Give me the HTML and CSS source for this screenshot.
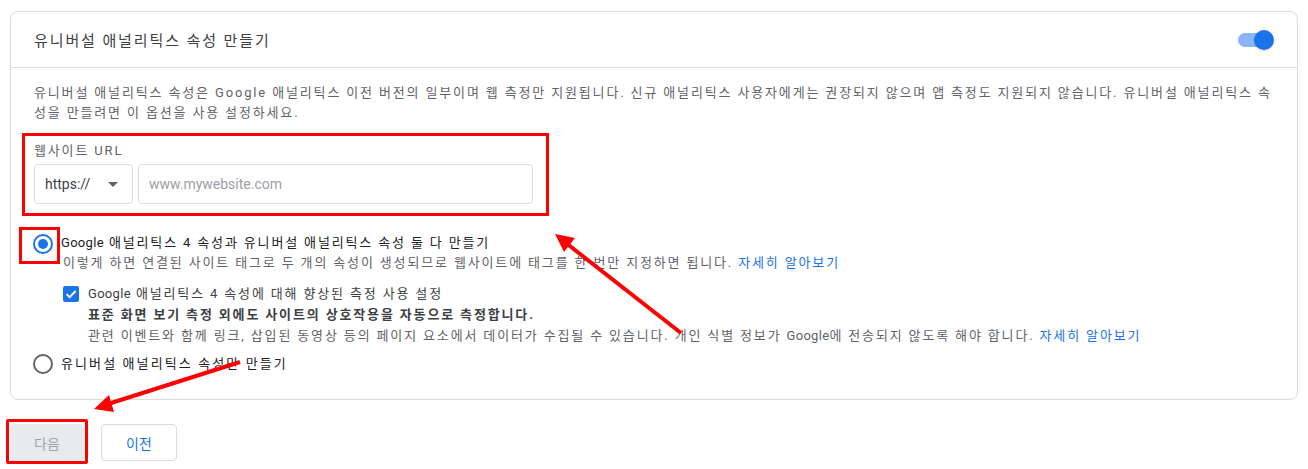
FILE: index.html
```html
<!DOCTYPE html>
<html lang="ko">
<head>
<meta charset="utf-8">
<link rel="stylesheet" href="styles.css">
</head>
<body>
<div class="page">
  <section class="card">
    <header class="card-header">
      <h2 class="card-title">유니버설 애널리틱스 속성 만들기</h2>
      <span class="toggle"><span class="toggle-track"></span><span class="toggle-knob"></span></span>
    </header>
    <div class="card-body">
      <p class="desc">유니버설 애널리틱스 속성은 Google 애널리틱스 이전 버전의 일부이며 웹 측정만 지원됩니다. 신규 애널리틱스 사용자에게는 권장되지 않으며 앱 측정도 지원되지 않습니다. 유니버설 애널리틱스 속성을 만들려면 이 옵션을 사용 설정하세요.</p>
      <div class="url-block">
        <div class="url-label">웹사이트 URL</div>
        <div class="url-fields">
          <div class="select"><span>https://</span><span class="caret"></span></div>
          <div class="input">www.mywebsite.com</div>
        </div>
      </div>
      <div class="options">
        <div class="option">
          <span class="radio checked"></span>
          <div class="option-text">
            <div class="option-label"><span class="en">Google</span> 애널리틱스 4 속성과 유니버설 애널리틱스 속성 둘 다 만들기</div>
            <div class="option-help">이렇게 하면 연결된 사이트 태그로 두 개의 속성이 생성되므로 웹사이트에 태그를 한 번만 지정하면 됩니다. <a class="link">자세히 알아보기</a></div>
            <div class="check-row">
              <span class="checkbox"><svg viewBox="0 0 16 16" width="16" height="16"><path d="M3.5 8.2 L6.6 11.2 L12.6 5" fill="none" stroke="#fff" stroke-width="1.8"/></svg></span>
              <div class="check-text">
                <div class="check-label"><span class="en">Google</span> 애널리틱스 4 속성에 대해 향상된 측정 사용 설정</div>
                <div class="check-strong">표준 화면 보기 측정 외에도 사이트의 상호작용을 자동으로 측정합니다.</div>
                <div class="check-help">관련 이벤트와 함께 링크, 삽입된 동영상 등의 페이지 요소에서 데이터가 수집될 수 있습니다. 개인 식별 정보가 <span class="en">Google</span>에 전송되지 않도록 해야 합니다. <a class="link">자세히 알아보기</a></div>
              </div>
            </div>
          </div>
        </div>
        <div class="option option-2">
          <span class="radio"></span>
          <div class="option-text">
            <div class="option-label wide">유니버설 애널리틱스 속성만 만들기</div>
          </div>
        </div>
      </div>
    </div>
  </section>
  <div class="actions">
    <button class="btn btn-disabled">다음</button>
    <button class="btn btn-outline">이전</button>
  </div>

  <div class="mark mark-url"></div>
  <div class="mark mark-radio"></div>
  <div class="mark mark-next"></div>
  <svg class="arrows" width="1308" height="469" viewBox="0 0 1308 469">
    <line x1="681" y1="333" x2="566" y2="243" stroke="#ff0000" stroke-width="4"/>
    <polygon points="555,234 575,238 564,252" fill="#ff0000"/>
    <line x1="240" y1="362" x2="108" y2="404" stroke="#ff0000" stroke-width="4"/>
    <polygon points="94,409 109,395 114,412" fill="#ff0000"/>
  </svg>
</div>
</body>
</html>
```

FILE: styles.css
```css
* { box-sizing: border-box; }
html, body { margin: 0; padding: 0; background: #fff; }
body {
  font-family: Roboto, "Noto Sans CJK KR", "Noto Sans", sans-serif;
  color: #202124;
}
.page {
  position: relative;
  width: 1308px;
  height: 469px;
  padding-top: 11px;
  overflow: hidden;
}
.card {
  margin: 0 10px;
  border: 1px solid #dadce0;
  border-radius: 8px;
}
.card-header {
  height: 56px;
  padding: 0 23px;
  display: flex;
  align-items: center;
  justify-content: space-between;
  border-bottom: 1px solid #dadce0;
}
.card-title {
  margin: 0;
  font-size: 15px;
  font-weight: 400;
  letter-spacing: 1.9px;
  color: #3c4043;
}
.toggle {
  position: relative;
  width: 36px;
  height: 20px;
  display: block;
}
.toggle-track {
  position: absolute;
  left: 0;
  top: 3px;
  width: 34px;
  height: 14px;
  border-radius: 7px;
  background: #8ab4f8;
}
.toggle-knob {
  position: absolute;
  right: 0;
  top: 0;
  width: 20px;
  height: 20px;
  border-radius: 50%;
  background: #1a73e8;
  box-shadow: 0 1px 2px rgba(0,0,0,0.15);
}
.card-body {
  padding: 15px 23px 25px;
  letter-spacing: 1.85px;
  word-break: break-all;
}
.en { letter-spacing: 0.3px; }
.desc {
  margin: 0;
  font-size: 13px;
  line-height: 20px;
  color: #5f6368;
}
.url-block {
  margin-top: 19px;
}
.url-label {
  font-size: 13px;
  line-height: 18px;
  color: #5f6368;
}
.url-fields {
  margin-top: 4px;
  display: flex;
  gap: 5px;
  letter-spacing: 0;
}
.select {
  width: 99px;
  height: 40px;
  border: 1px solid #dadce0;
  border-radius: 4px;
  display: flex;
  align-items: center;
  justify-content: space-between;
  padding: 0 14px 0 10px;
  font-size: 14px;
  color: #3c4043;
}
.caret {
  width: 0;
  height: 0;
  border-left: 5px solid transparent;
  border-right: 5px solid transparent;
  border-top: 5px solid #5f6368;
}
.input {
  width: 395px;
  height: 40px;
  border: 1px solid #dadce0;
  border-radius: 4px;
  display: flex;
  align-items: center;
  padding: 0 10px;
  font-size: 14px;
  color: #9aa0a6;
}
.options {
  margin-top: 29px;
}
.option {
  display: flex;
  align-items: flex-start;
  gap: 8px;
}
.option-2 {
  margin-top: 8px;
}
.radio {
  flex: none;
  width: 20px;
  height: 20px;
  margin-left: -1px;
  border: 2px solid #5f6368;
  border-radius: 50%;
  position: relative;
}
.radio.checked {
  border-color: #1a73e8;
  margin-top: 1px;
}
.radio.checked::after {
  content: "";
  position: absolute;
  left: 3px;
  top: 3px;
  width: 10px;
  height: 10px;
  border-radius: 50%;
  background: #1a73e8;
}
.option-label {
  font-size: 13px;
  line-height: 20px;
  color: #202124;
}
.option-label.wide {
  letter-spacing: 2.1px;
}
.option-help {
  font-size: 13px;
  line-height: 20px;
  color: #5f6368;
  padding-left: 2px;
}
.link {
  color: #1a73e8;
  text-decoration: none;
}
.check-row {
  margin-top: 10px;
  margin-left: 2px;
  display: flex;
  align-items: flex-start;
  gap: 9px;
}
.checkbox {
  flex: none;
  width: 16px;
  height: 16px;
  margin-top: 3px;
  border-radius: 2px;
  background: #1a73e8;
  display: block;
}
.checkbox svg { display: block; }
.check-label {
  font-size: 13px;
  line-height: 21px;
  color: #3c4043;
}
.check-strong {
  font-size: 13px;
  line-height: 21px;
  font-weight: 700;
  color: #3c4043;
}
.check-help {
  font-size: 13px;
  line-height: 21px;
  color: #5f6368;
}
.actions {
  margin: 24px 0 0 10px;
  display: flex;
  gap: 17px;
}
.btn {
  height: 37px;
  border-radius: 4px;
  font-family: Roboto, "Noto Sans CJK KR", sans-serif;
  font-size: 14px;
  padding: 0;
}
.btn-disabled {
  width: 74px;
  border: none;
  background: #e8eaed;
  color: #a0a4a8;
}
.btn-outline {
  width: 76px;
  border: 1px solid #dadce0;
  background: #fff;
  color: #1a73e8;
}
.mark {
  position: absolute;
  border: 3px solid #ff0000;
}
.mark-url { left: 22px; top: 133px; width: 527px; height: 83px; }
.mark-radio { left: 19px; top: 227px; width: 41px; height: 37px; }
.mark-next { left: 6px; top: 419px; width: 82px; height: 45px; border-radius: 2px; }
.arrows {
  position: absolute;
  left: 0;
  top: 0;
  pointer-events: none;
}
```
